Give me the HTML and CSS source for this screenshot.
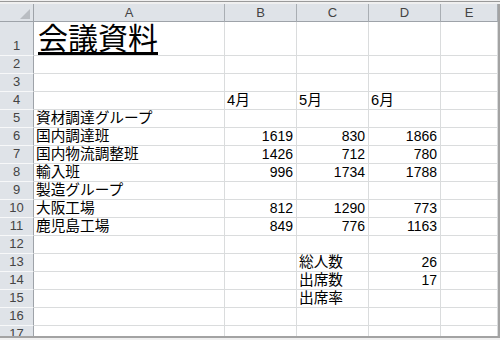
FILE: index.html
```html
<!DOCTYPE html>
<html lang="ja">
<head>
    <meta charset="UTF-8">
    <title>会議資料</title>
    <link rel="stylesheet" href="styles.css">
</head>
<body>
    <div class="window">
        <div class="topbar"></div>
        <div class="sheet">
            <!-- En-tête des colonnes -->
            <div class="row head-row">
                <div class="corner">
                    <svg width="10" height="10" viewBox="0 0 10 10"><polygon points="10,0 10,10 0,10" fill="#b9bdc2"/></svg>
                </div>
                <div class="col-head">A</div>
                <div class="col-head">B</div>
                <div class="col-head">C</div>
                <div class="col-head">D</div>
                <div class="col-head">E</div>
            </div>

            <div class="row title-row">
                <div class="row-head">1</div>
                <div class="cell title">会議資料</div>
                <div class="cell"></div><div class="cell"></div><div class="cell"></div><div class="cell"></div>
            </div>
            <div class="row">
                <div class="row-head">2</div>
                <div class="cell"></div><div class="cell"></div><div class="cell"></div><div class="cell"></div><div class="cell"></div>
            </div>
            <div class="row">
                <div class="row-head">3</div>
                <div class="cell"></div><div class="cell"></div><div class="cell"></div><div class="cell"></div><div class="cell"></div>
            </div>
            <div class="row">
                <div class="row-head">4</div>
                <div class="cell"></div>
                <div class="cell">4月</div>
                <div class="cell">5月</div>
                <div class="cell">6月</div>
                <div class="cell"></div>
            </div>
            <div class="row">
                <div class="row-head">5</div>
                <div class="cell">資材調達グループ</div>
                <div class="cell"></div><div class="cell"></div><div class="cell"></div><div class="cell"></div>
            </div>
            <div class="row">
                <div class="row-head">6</div>
                <div class="cell">国内調達班</div>
                <div class="cell num">1619</div>
                <div class="cell num">830</div>
                <div class="cell num">1866</div>
                <div class="cell"></div>
            </div>
            <div class="row">
                <div class="row-head">7</div>
                <div class="cell">国内物流調整班</div>
                <div class="cell num">1426</div>
                <div class="cell num">712</div>
                <div class="cell num">780</div>
                <div class="cell"></div>
            </div>
            <div class="row">
                <div class="row-head">8</div>
                <div class="cell">輸入班</div>
                <div class="cell num">996</div>
                <div class="cell num">1734</div>
                <div class="cell num">1788</div>
                <div class="cell"></div>
            </div>
            <div class="row">
                <div class="row-head">9</div>
                <div class="cell">製造グループ</div>
                <div class="cell"></div><div class="cell"></div><div class="cell"></div><div class="cell"></div>
            </div>
            <div class="row">
                <div class="row-head">10</div>
                <div class="cell">大阪工場</div>
                <div class="cell num">812</div>
                <div class="cell num">1290</div>
                <div class="cell num">773</div>
                <div class="cell"></div>
            </div>
            <div class="row">
                <div class="row-head">11</div>
                <div class="cell">鹿児島工場</div>
                <div class="cell num">849</div>
                <div class="cell num">776</div>
                <div class="cell num">1163</div>
                <div class="cell"></div>
            </div>
            <div class="row">
                <div class="row-head">12</div>
                <div class="cell"></div><div class="cell"></div><div class="cell"></div><div class="cell"></div><div class="cell"></div>
            </div>
            <div class="row">
                <div class="row-head">13</div>
                <div class="cell"></div><div class="cell"></div>
                <div class="cell">総人数</div>
                <div class="cell num">26</div>
                <div class="cell"></div>
            </div>
            <div class="row">
                <div class="row-head">14</div>
                <div class="cell"></div><div class="cell"></div>
                <div class="cell">出席数</div>
                <div class="cell num">17</div>
                <div class="cell"></div>
            </div>
            <div class="row">
                <div class="row-head">15</div>
                <div class="cell"></div><div class="cell"></div>
                <div class="cell">出席率</div>
                <div class="cell"></div><div class="cell"></div>
            </div>
            <div class="row">
                <div class="row-head">16</div>
                <div class="cell"></div><div class="cell"></div><div class="cell"></div><div class="cell"></div><div class="cell"></div>
            </div>
            <div class="row">
                <div class="row-head">17</div>
                <div class="cell"></div><div class="cell"></div><div class="cell"></div><div class="cell"></div><div class="cell"></div>
            </div>
        </div>
    </div>
</body>
</html>
```

FILE: styles.css
```css
body {
    margin: 0;
    padding: 0;
    background-color: #ffffff;
    font-family: 'Liberation Sans', 'Noto Sans CJK JP', sans-serif;
    color: #000000;
    overflow: hidden;
}

.window {
    width: 500px;
    height: 340px;
    box-sizing: border-box;
    overflow: hidden;
    background-color: #f0f0f0;
}

.topbar {
    height: 1px;
    margin-top: 1px;
    margin-bottom: 2px;
    background-color: #9a9a9a;
}

.sheet {
    width: 500px;
    height: 334px;
    box-sizing: border-box;
    overflow: hidden;
    background-color: #ffffff;
    border-right: 2px solid #a3a3a3;
    border-bottom: 2px solid #a3a3a3;
}

.row {
    display: grid;
    grid-template-columns: 34px 191px 72px 72px 72px 57px;
    height: 18px;
}

.title-row {
    height: 34px;
}

/* En-têtes */
.corner,
.col-head,
.row-head {
    box-sizing: border-box;
    background-color: #dfe3e8;
    color: #444444;
    font-size: 13px;
    line-height: 16px;
    display: flex;
    align-items: flex-end;
    justify-content: center;
}

.corner {
    border-right: 1px solid #9ea3a9;
    border-bottom: 1px solid #9ea3a9;
    justify-content: flex-end;
    padding: 0 3px 2px 0;
}

.col-head {
    border-right: 1px solid #a9aeb3;
    border-bottom: 1px solid #9ea3a9;
}

.row-head {
    border-right: 1px solid #9ea3a9;
    border-bottom: 1px solid #f7f8f9;
    padding-bottom: 1px;
}

/* Cellules */
.cell {
    box-sizing: border-box;
    border-right: 1px solid #dadcdd;
    border-bottom: 1px solid #dadcdd;
    font-size: 14.67px;
    line-height: 17px;
    padding: 0 2px;
    display: flex;
    align-items: flex-end;
    white-space: nowrap;
}

.cell.num {
    justify-content: flex-end;
    padding-right: 3px;
    font-size: 14px;
}

.cell.title {
    font-size: 30px;
    line-height: 33px;
    text-decoration: underline;
    text-underline-offset: 3px;
    padding-left: 4px;
}
```
